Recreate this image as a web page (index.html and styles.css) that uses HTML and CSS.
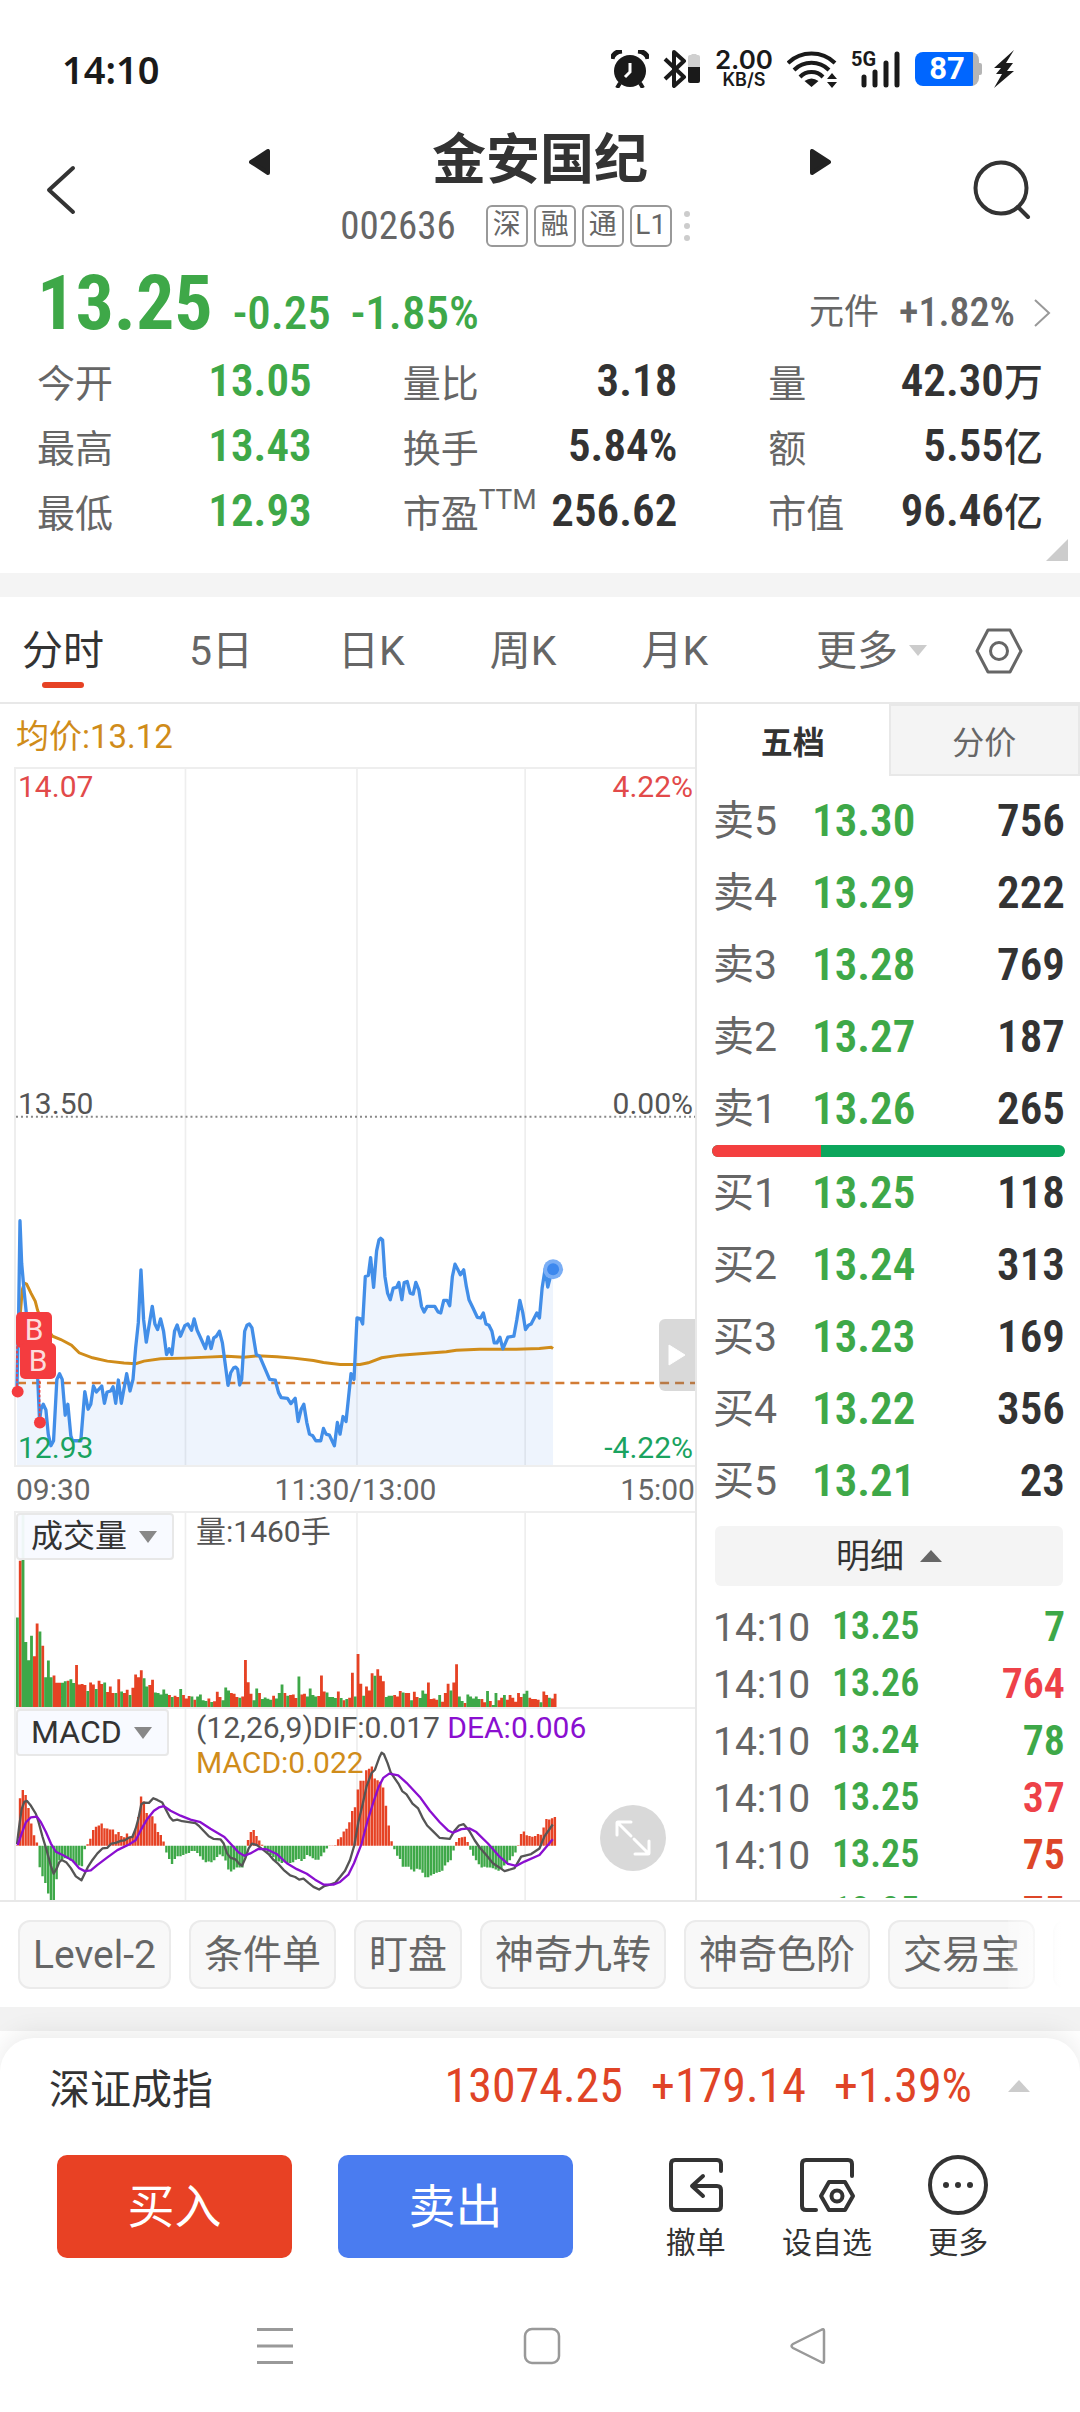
FILE: index.html
```html
<!DOCTYPE html>
<html lang="zh-CN">
<head>
<meta charset="utf-8">
<meta name="viewport" content="width=device-width, initial-scale=1">
<title>金安国纪 002636</title>
<link rel="stylesheet" href="styles.css">
</head>
<body>
<div class="app">
  <div class="status">
    <time class="clock">14:10</time>
    <div class="status-icons">
      <svg class="ic-alarm" width="38" height="38" viewBox="0 0 38 38"><circle cx="19" cy="21" r="16" fill="#1a1a1a"/><path d="M1 9A11 9 0 0 1 11 1M27 1A11 9 0 0 1 37 9" fill="none" stroke="#1a1a1a" stroke-width="5"/><path d="M9 33l-3 5M29 33l3 5" stroke="#1a1a1a" stroke-width="4"/><path d="M19 13v9l-5 5" fill="none" stroke="#fff" stroke-width="3"/></svg>
      <svg class="ic-bt" width="38" height="38" viewBox="0 0 38 38"><path d="M2 9l19 18-10 9V2l10 9L2 29" fill="none" stroke="#1a1a1a" stroke-width="4" stroke-linejoin="round"/><path d="M25 7a2 2 0 0 1 2-2h1l1-1h4l1 1h1a2 2 0 0 1 2 2v10H25z" fill="#d0d0d0"/><path d="M25 17h12v14a2 2 0 0 1-2 2h-8a2 2 0 0 1-2-2z" fill="#1a1a1a"/></svg>
      <div class="speed"><b>2.00</b><small>KB/S</small></div>
      <svg class="ic-wifi" width="50" height="38" viewBox="0 0 50 38"><g fill="none" stroke="#1a1a1a" stroke-width="4"><path d="M1 13a34 34 0 0 1 47 0"/><path d="M7 20a25 25 0 0 1 35 0"/><path d="M13 27a16 16 0 0 1 23 0"/></g><path d="M24.500 37l-7-6q7-5 14 0zM40 29l5-6 5 6zM40 32l5 6 5-6z" fill="#1a1a1a"/></svg>
      <div class="cell"><b>5G</b><svg width="40" height="37" viewBox="0 0 40 37"><g stroke="#1a1a1a" stroke-width="5" stroke-linecap="round"><path d="M3 26v8M14 21v13M25 12v22M36 3v31"/></g></svg></div>
      <div class="battery"><b>87</b><i></i></div>
      <svg width="22" height="38" viewBox="0 0 22 38"><path d="M21 0L1 18h7l-5 6h6L1 38l20-17h-7l6-8h-7z" fill="#1a1a1a"/></svg>
    </div>
  </div>

  <header class="header">
    <button class="icon-btn" aria-label="返回"><svg width="30" height="50" viewBox="0 0 30 50"><path d="M27 3L3 25l24 22" fill="none" stroke="#333" stroke-width="4" stroke-linecap="round" stroke-linejoin="round"/></svg></button>
    <button class="icon-btn step" aria-label="上一只"><svg width="22" height="26" viewBox="0 0 22 26"><path d="M19 2v22L2 13z" fill="#222" stroke="#222" stroke-width="4" stroke-linejoin="round"/></svg></button>
    <div class="title">
      <h1>金安国纪</h1>
      <div class="code-row">
        <span class="code">002636</span>
        <span class="tag">深</span><span class="tag">融</span><span class="tag">通</span><span class="tag">L1</span>
        <svg class="dots" width="6" height="30" viewBox="0 0 6 30" fill="#ccc"><circle cx="3" cy="3" r="3"/><circle cx="3" cy="15" r="3"/><circle cx="3" cy="27" r="3"/></svg>
      </div>
    </div>
    <button class="icon-btn step" aria-label="下一只"><svg width="22" height="26" viewBox="0 0 22 26"><path d="M3 2v22l17-11z" fill="#222" stroke="#222" stroke-width="4" stroke-linejoin="round"/></svg></button>
    <button class="icon-btn search" aria-label="搜索"><svg width="58" height="60" viewBox="0 0 58 60"><g fill="none" stroke="#333" stroke-width="4" stroke-linecap="round"><circle cx="28" cy="28" r="25.500"/><path d="M45 47l10 10"/></g></svg></button>
  </header>

  <section class="quote">
    <div class="quote-head">
      <strong class="price num">13.25</strong>
      <span class="change num">-0.25</span>
      <span class="change num">-1.85%</span>
      <a class="sector" href="#">元件<span class="num">+1.82%</span><svg width="18" height="30" viewBox="0 0 18 30"><path d="M2 2l14 13L2 28" fill="none" stroke="#999" stroke-width="2"/></svg></a>
    </div>
    <dl class="stats">
      <div><dt>今开</dt><dd class="num down">13.05</dd></div>
      <div><dt>量比</dt><dd class="num">3.18</dd></div>
      <div><dt>量</dt><dd class="num">42.30<i>万</i></dd></div>
      <div><dt>最高</dt><dd class="num down">13.43</dd></div>
      <div><dt>换手</dt><dd class="num">5.84%</dd></div>
      <div><dt>额</dt><dd class="num">5.55<i>亿</i></dd></div>
      <div><dt>最低</dt><dd class="num down">12.93</dd></div>
      <div><dt>市盈<sup>TTM</sup></dt><dd class="num">256.62</dd></div>
      <div><dt>市值</dt><dd class="num">96.46<i>亿</i></dd></div>
    </dl>
    <svg class="corner" width="22" height="22" viewBox="0 0 22 22"><path d="M22 0v22H0z" fill="#ccc"/></svg>
  </section>

  <nav class="tabs">
    <button class="tab on">分时</button>
    <button class="tab">5日</button>
    <button class="tab">日K</button>
    <button class="tab">周K</button>
    <button class="tab">月K</button>
    <button class="tab more">更多<svg width="18" height="11" viewBox="0 0 18 11"><path d="M0 0h18L9 11z" fill="#ccc"/></svg></button>
    <button class="tab gear" aria-label="设置"><svg width="48" height="48" viewBox="0 0 48 48"><g fill="none" stroke="#666" stroke-width="3" stroke-linejoin="round"><path d="M13 3h22l11 21-11 21H13L2 24z"/><circle cx="24" cy="24" r="8.500"/></g></svg></button>
  </nav>

  <main class="board">
    <section class="charts">
      <p class="avg">均价:13.12</p>
      <div class="pane price-pane">
        <svg class="plot" viewBox="0 0 2043 2097" preserveAspectRatio="none">
          <g class="grid"><path d="M510 0V2097M1026 0V2097M1532 0V2097"/></g>
          <path d="M0 1048H2043" class="mid"/>
          <g transform="translate(-45 1239)">
            <path id="area" class="area"/>
            <path class="base" d="M48 611H2088"/>
            <polyline class="avg-line" points="58,400 64,330 70,310 77,313 90,340 103,365 110,392 125,430 155,470 180,480 212,497 235,520 275,535 320,545 370,551 405,553 430,545 480,538 550,536 620,533 680,530 730,533 770,529 830,532 880,536 940,543 970,549 1020,555 1080,555 1105,550 1145,535 1200,527 1260,523 1340,517 1370,512 1440,509 1550,509 1620,507 1655,503 1661,507"/>
            <polyline id="price" class="price-line" points="48,620 53,400 57,122 62,250 70,340 78,420 95,480 110,590 116,725 120,690 127,675 135,692 142,765 150,800 158,785 168,600 176,583 184,600 193,708 201,675 210,770 215,785 240,785 252,637 262,690 270,675 278,620 287,638 303,620 311,672 319,638 330,635 337,622 345,672 353,602 362,672 378,583 388,635 397,600 405,505 413,430 421,270 429,420 437,488 455,380 463,433 471,450 480,418 489,455 498,525 506,508 514,525 522,455 530,436 540,470 553,438 562,433 573,452 581,418 590,452 615,507 623,472 632,507 640,475 648,470 657,455 666,490 683,618 691,580 700,565 706,563 712,570 718,617 724,600 733,455 740,437 747,433 755,445 768,525 778,530 808,600 825,602 835,640 843,655 862,657 872,673 885,657 894,727 903,690 911,675 920,730 928,765 938,770 947,785 962,785 970,748 978,765 988,768 1003,800 1012,730 1020,765 1029,712 1038,727 1045,660 1053,583 1062,600 1071,415 1082,418 1088,433 1096,290 1105,287 1112,233 1121,323 1130,213 1137,180 1142,175 1148,180 1155,290 1163,340 1171,360 1180,325 1190,323 1197,308 1206,360 1213,308 1222,305 1231,340 1240,343 1248,308 1257,330 1265,380 1273,397 1282,380 1305,380 1315,397 1323,400 1332,362 1342,362 1350,378 1358,290 1366,253 1374,268 1382,285 1392,270 1400,320 1408,360 1420,385 1433,413 1443,415 1451,400 1459,433 1468,437 1477,455 1484,490 1492,490 1501,473 1510,508 1525,473 1543,470 1552,420 1561,362 1570,400 1578,450 1587,437 1595,433 1612,400 1620,415 1628,325 1637,268 1645,322 1653,290 1661,268"/>
            <circle cx="1661" cy="268" r="30" fill="#7aaef5"/><circle cx="1661" cy="268" r="18" fill="#3d88ee"/>
            <path class="trade-stem" d="M48 500V630M116 590V725"/>
            <g fill="#f43c3f"><circle cx="50" cy="637" r="18"/><circle cx="117" cy="730" r="18"/></g>
          </g>
        </svg>
        <span class="lbl tl up">14.07</span><span class="lbl tr up">4.22%</span>
        <span class="lbl ml">13.50</span><span class="lbl mr">0.00%</span>
        <span class="lbl bl low">12.93</span><span class="lbl br low">-4.22%</span>
        <span class="mark mark-a">B</span><span class="mark mark-b">B</span>
        <button class="handle" aria-label="展开"><svg width="18" height="22" viewBox="0 0 18 22"><path d="M1 1v20l16-10z" fill="#fff" stroke="#fff" stroke-linejoin="round"/></svg></button>
      </div>
      <div class="times"><span>09:30</span><span>11:30/13:00</span><span>15:00</span></div>
      <div class="pane vol-pane">
        <svg class="plot" viewBox="0 0 2043 585" preserveAspectRatio="none"><g class="grid"><path d="M510 0V585M1026 0V585M1532 0V585"/></g><path id="vol-up" class="fill-up"/><path id="vol-down" class="fill-down"/></svg>
        <button class="picker">成交量<svg width="18" height="12" viewBox="0 0 18 12"><path d="M0 0h18L9 12z" fill="#888"/></svg></button>
        <span class="legend">量:1460手</span>
      </div>
      <div class="pane macd-pane">
        <svg class="plot" viewBox="0 0 2043 582" preserveAspectRatio="none"><g class="grid"><path d="M510 0V582M1026 0V582M1532 0V582"/></g>
          <path id="macd-up" class="fill-up"/><path id="macd-down" class="fill-down"/>
          <g transform="translate(-45 -620)">
            <polyline class="dif" points="48,1032 55,975 62,925 70,903 78,900 90,915 105,940 113,965 125,1010 137,1050 150,1098 158,1122 168,1105 175,1087 183,1080 197,1088 210,1105 225,1130 242,1142 250,1125 262,1100 275,1080 290,1060 305,1045 320,1043 332,1030 345,1028 360,1022 372,1020 385,1012 395,1010 405,985 413,955 422,910 430,905 445,906 458,892 470,897 485,905 495,925 508,950 517,960 530,957 545,962 585,968 597,978 610,992 625,1008 640,1016 660,1017 670,1030 680,1060 690,1073 705,1078 715,1090 725,1098 735,1075 745,1045 755,1030 770,1035 790,1050 805,1062 820,1080 835,1093 850,1110 870,1127 885,1132 897,1140 910,1137 925,1150 940,1162 957,1170 972,1160 990,1155 1005,1150 1020,1132 1035,1113 1050,1080 1063,1035 1075,965 1088,910 1100,855 1115,815 1125,805 1138,768 1145,753 1152,758 1163,785 1172,812 1185,832 1197,850 1207,870 1220,880 1238,908 1255,923 1270,955 1282,975 1300,993 1320,1013 1350,1016 1365,990 1378,975 1392,971 1408,990 1425,1020 1440,1042 1460,1065 1480,1090 1498,1102 1515,1114 1545,1105 1565,1070 1595,1062 1620,1045 1635,1008 1660,972"/>
            <polyline class="dea" points="50,1035 62,1000 75,965 90,950 108,948 120,965 135,995 150,1030 165,1055 190,1067 215,1082 235,1105 252,1114 270,1112 290,1095 320,1072 350,1050 385,1033 405,1020 420,990 440,955 460,930 475,920 490,916 510,930 540,945 570,957 600,965 630,985 672,1010 695,1035 715,1057 732,1067 750,1060 775,1046 800,1048 830,1062 860,1090 890,1108 920,1122 945,1140 970,1155 1000,1155 1020,1147 1045,1125 1062,1090 1085,1030 1103,960 1120,905 1135,860 1150,830 1168,817 1195,822 1220,845 1260,888 1290,930 1320,965 1345,990 1360,997 1385,986 1410,984 1430,995 1465,1030 1500,1070 1525,1092 1550,1098 1575,1085 1620,1065 1660,1017"/>
          </g>
        </svg>
        <button class="picker">MACD<svg width="18" height="12" viewBox="0 0 18 12"><path d="M0 0h18L9 12z" fill="#888"/></svg></button>
        <p class="legend macd-legend">(12,26,9)DIF:0.017 <span class="c-dea">DEA:0.006</span><br><span class="c-avg">MACD:0.022</span></p>
        <button class="expand" aria-label="全屏"><svg width="36" height="36" viewBox="0 0 36 36"><path d="M2 15V3q0-1 1-1h13M3 3l13 13M34 21v12q0 1-1 1H20M33 33L19 19" fill="none" stroke="#fff" stroke-width="3" stroke-linecap="round"/></svg></button>
      </div>
    </section>

    <aside class="book">
      <div class="book-tabs"><button class="on">五档</button><button>分价</button></div>
      <table class="depth"><tbody>
        <tr><th>卖5</th><td>13.30</td><td>756</td></tr>
        <tr><th>卖4</th><td>13.29</td><td>222</td></tr>
        <tr><th>卖3</th><td>13.28</td><td>769</td></tr>
        <tr><th>卖2</th><td>13.27</td><td>187</td></tr>
        <tr><th>卖1</th><td>13.26</td><td>265</td></tr>
      </tbody></table>
      <div class="ratio"><i></i></div>
      <table class="depth"><tbody>
        <tr><th>买1</th><td>13.25</td><td>118</td></tr>
        <tr><th>买2</th><td>13.24</td><td>313</td></tr>
        <tr><th>买3</th><td>13.23</td><td>169</td></tr>
        <tr><th>买4</th><td>13.22</td><td>356</td></tr>
        <tr><th>买5</th><td>13.21</td><td>23</td></tr>
      </tbody></table>
      <button class="detail">明细<svg width="22" height="12" viewBox="0 0 22 12"><path d="M11 0l11 12H0z" fill="#666"/></svg></button>
      <div class="ticks-wrap"><table class="ticks"><tbody>
        <tr><th>14:10</th><td>13.25</td><td>7</td></tr>
        <tr><th>14:10</th><td>13.26</td><td class="red">764</td></tr>
        <tr><th>14:10</th><td>13.24</td><td>78</td></tr>
        <tr><th>14:10</th><td>13.25</td><td class="red">37</td></tr>
        <tr><th>14:10</th><td>13.25</td><td class="brick">75</td></tr>
        <tr><th>14:10</th><td>13.25</td><td class="brick">75</td></tr>
      </tbody></table></div>
    </aside>
  </main>

  <div class="chips">
    <button>Level-2</button><button>条件单</button><button>盯盘</button><button>神奇九转</button><button>神奇色阶</button><button>交易宝</button><button class="next" aria-label="更多功能"></button>
  </div>

  <div class="dock">
    <div class="sheet">
      <div class="index-row">
        <span class="index-name">深证成指</span>
        <span class="idx">13074.25</span><span class="idx">+179.14</span><span class="idx">+1.39%</span>
        <svg width="22" height="12" viewBox="0 0 22 12"><path d="M11 0l11 12H0z" fill="#ccc"/></svg>
      </div>
      <div class="actions">
        <button class="trade buy">买入</button>
        <button class="trade sell">卖出</button>
        <div class="tools">
          <button><svg width="60" height="60" viewBox="0 0 60 60"><g fill="none" stroke="#333" stroke-width="4" stroke-linecap="round" stroke-linejoin="round"><path d="M55 16V9q0-4-4-4H9Q5 5 5 9v42q0 4 4 4h42q4 0 4-4V35q0-4-4-4H27M37 21L26 31l11 10"/></g></svg>撤单</button>
          <button><svg width="60" height="60" viewBox="0 0 60 60"><g fill="none" stroke="#333" stroke-width="4" stroke-linecap="round" stroke-linejoin="round"><path d="M55 21V9q0-4-4-4H9Q5 5 5 9v42q0 4 4 4h10M32 27h16l8 14-8 14H32l-8-14z"/><circle cx="40" cy="41" r="5.500"/></g></svg>设自选</button>
          <button><svg width="60" height="60" viewBox="0 0 60 60"><circle cx="30" cy="30" r="28" fill="none" stroke="#333" stroke-width="4"/><g fill="#333"><circle cx="18" cy="30" r="3"/><circle cx="30" cy="30" r="3"/><circle cx="42" cy="30" r="3"/></g></svg>更多</button>
        </div>
      </div>
      <div class="sysnav">
        <button aria-label="最近任务"><svg width="38" height="38" viewBox="0 0 38 38"><path d="M1 2.500h36M1 19h36M1 35.500h36" stroke="#999" stroke-width="3"/></svg></button>
        <button aria-label="主屏幕"><svg width="38" height="38" viewBox="0 0 38 38"><rect x="2" y="2" width="34" height="34" rx="7" fill="none" stroke="#999" stroke-width="2.500"/></svg></button>
        <button aria-label="返回"><svg width="38" height="38" viewBox="0 0 38 38"><path d="M35 4v30q0 3-3 1L4 21q-3-2 0-4L32 3q3-2 3 1z" fill="none" stroke="#999" stroke-width="2.500"/></svg></button>
      </div>
    </div>
  </div>
</div>
<script src="script.js"></script>
</body>
</html>
```
FILE: styles.css
```css
* { box-sizing: border-box; }
body { margin: 0; background: #fff; color: #333; font-family: Roboto, "Noto Sans CJK SC", sans-serif; }
button { font: inherit; color: inherit; background: none; border: 0; padding: 0; margin: 0; }
a { color: inherit; text-decoration: none; }
svg { display: block; flex: none; }
p, h1, dl, dd { margin: 0; }
i { font-style: normal; }

.num, .depth td, .ticks td, .idx, .code { font-family: "Roboto Condensed", Roboto, "Noto Sans CJK SC", sans-serif; }

/* status bar */
.status { display: flex; justify-content: space-between; align-items: center; height: 105px; padding: 33px 65px 0 62px; color: #1a1a1a; }
.clock { font-size: 38px; font-weight: 600; line-height: 68px; font-family: "Noto Sans", sans-serif; }
.status-icons { display: flex; align-items: center; gap: 14px; }
.speed { display: flex; flex-direction: column; align-items: center; font-family: Inter, sans-serif; }
.speed b { font-size: 26px; line-height: 22px; font-weight: 600; }
.speed small { font-size: 18px; line-height: 18px; font-weight: 600; }
.cell { position: relative; padding-left: 10px; }
.cell b { position: absolute; left: 0; top: 0; font-size: 20px; line-height: 16px; }
.battery { display: flex; align-items: center; justify-content: center; width: 64px; height: 34px; border-radius: 8px; background: linear-gradient(90deg, #06f 58px, #b5b5b5 58px); position: relative; color: #fff; }
.battery b { font-size: 31px; line-height: 34px; }
.battery i { position: absolute; right: -3px; top: 11px; width: 3px; height: 12px; border-radius: 0 2px 2px 0; background: #b5b5b5; }

/* title bar */
.header { display: grid; grid-template-columns: 203px 22px 1fr 22px 200px; align-items: start; height: 153px; padding: 26px 49px 0 46px; }
.icon-btn { display: flex; align-items: center; height: 60px; margin-top: 29px; }
.icon-btn.step { height: 26px; margin-top: 18px; }
.search { justify-content: flex-end; }
.title { display: flex; flex-direction: column; align-items: center; }
h1 { font-size: 54px; line-height: 60px; font-weight: 700; }
.code-row { display: flex; align-items: center; gap: 6px; height: 42px; margin: 14px 50px 0 0; color: #666; }
.code { font-size: 39px; line-height: 42px; margin-right: 24px; }
.tag { width: 42px; height: 42px; border: 2px solid #999; border-radius: 6px; font-size: 28px; line-height: 36px; text-align: center; }
.dots { margin-left: 6px; }

/* quote */
.quote { position: relative; height: 339px; padding: 4px 37px 0; border-bottom: 24px solid #f4f4f4; }
.quote-head { display: flex; align-items: baseline; height: 86px; color: #3ea848; }
.price { font-size: 76px; line-height: 82px; margin-right: 20px; }
.change { font-size: 47px; line-height: 48px; font-weight: 500; margin-right: 20px; }
.sector { display: flex; align-items: center; align-self: flex-start; margin: 29px -8px 0 auto; color: #666; font-size: 35px; line-height: 44px; }
.sector .num { font-size: 40px; font-weight: 500; margin: 0 18px 0 20px; }
.stats { display: grid; grid-template-columns: repeat(3, 1fr); column-gap: 91px; }
.stats > div { display: flex; justify-content: space-between; align-items: center; height: 65px; }
.stats dt { font-size: 38px; color: #666; white-space: nowrap; position: relative; }
.stats sup { position: absolute; left: 100%; top: 2px; font-size: 28px; line-height: 30px; }
.stats dd { font-size: 45px; line-height: 65px; font-weight: 600; white-space: nowrap; }
.stats dd i { font-size: 39px; line-height: 1; font-weight: 500; }
.down { color: #3ea848; }
.corner { position: absolute; right: 12px; bottom: 12px; }

/* period tabs */
.tabs { display: flex; align-items: center; height: 107px; padding: 2px 57px 0 22px; border-bottom: 2px solid #e8e8e8; color: #666; font-size: 41px; line-height: 60px; }
.tab { position: relative; display: flex; align-items: center; flex: none; margin-right: 85px; }
.tab.on { color: #333; }
.tab.on::after { content: ""; position: absolute; left: 20px; right: 20px; top: 61px; height: 6px; border-radius: 3px; background: #e64224; }
.tab.more { margin-left: auto; margin-right: 48px; gap: 11px; }
.tab.gear { margin-right: 0; }

/* charts */
.board { display: grid; grid-template-columns: 697fr 383fr; border-bottom: 2px solid #e8e8e8; }
.charts { border-right: 2px solid #e8e8e8; padding-left: 14px; min-width: 0; }
.avg { height: 63px; padding-left: 2px; font-size: 33px; line-height: 65px; color: #d08c1a; }
.pane { position: relative; border-top: 2px solid #eee; border-left: 2px solid #eee; }
.plot { display: block; width: 100%; height: 100%; overflow: hidden; }
.price-pane .plot { overflow: visible; }
.grid path { fill: none; stroke: #eee; stroke-width: 5; }
.price-pane { height: 700px; border-bottom: 2px solid #eee; }
.mid { stroke: #888; stroke-width: 6; stroke-dasharray: 6 9; }
.area { fill: rgba(61, 136, 238, .09); }
.price-line { fill: none; stroke: #428ee8; stroke-width: 10; stroke-linejoin: round; }
.avg-line { fill: none; stroke: #d08c1a; stroke-width: 9; }
.base { fill: none; stroke: #d27c35; stroke-width: 7; stroke-dasharray: 27 18; }
.trade-stem { fill: none; stroke: #f43c3f; stroke-width: 5; stroke-dasharray: 8 6; }
.fill-up { fill: #e64224; }
.fill-down { fill: #3ea848; }
.dif, .dea { fill: none; stroke: #555; stroke-width: 7; stroke-linejoin: round; }
.dea { stroke: #8a0fd0; }
.lbl { position: absolute; font-size: 30px; line-height: 30px; color: #555; }
.tl, .ml, .bl { left: 2px; }
.tr, .mr, .br { right: 2px; }
.tl, .tr { top: 3px; }
.ml, .mr { top: 320px; }
.bl, .br { bottom: 2px; }
.up { color: #e24a4a; }
.low { color: #1aa35f; }
.mark { position: absolute; width: 36px; height: 36px; border-radius: 5px; background: #f43c3f; color: #fcdcdc; font-size: 30px; line-height: 36px; text-align: center; }
.mark-a { left: 0; top: 543px; }
.mark-b { left: 4px; top: 574px; }
.handle { position: absolute; right: 0; top: 550px; width: 36px; height: 72px; border-radius: 6px 0 0 6px; background: rgba(120, 120, 120, .28); display: flex; align-items: center; justify-content: center; }
.times { display: flex; justify-content: space-between; height: 44px; padding-left: 2px; font-size: 30px; line-height: 46px; color: #666; }
.vol-pane { height: 196px; }
.macd-pane { height: 193px; }
.picker { position: absolute; left: 0; top: 0; display: flex; align-items: center; gap: 12px; height: 47px; padding: 0 15px 0 13px; border: 2px solid #e8e8e8; border-radius: 4px; background: rgba(248, 250, 255, .95); color: #333; font-size: 32px; line-height: 43px; }
.legend { position: absolute; left: 180px; top: 1px; font-size: 30px; line-height: 35px; color: #555; white-space: nowrap; }
.c-dea { color: #8a0fd0; }
.c-avg { color: #d08c1a; }
.expand { position: absolute; right: 29px; bottom: 29px; width: 66px; height: 66px; border-radius: 50%; background: #d9d9d9; display: flex; align-items: center; justify-content: center; }

/* order book */
.book-tabs { display: grid; grid-template-columns: 1fr 1fr; height: 72px; font-size: 32px; }
.book-tabs button { border: 2px solid #e8e8e8; background: #f4f4f4; color: #666; }
.book-tabs .on { border: 0; background: none; font-weight: 700; color: #333; }
.depth { width: 100%; border-collapse: collapse; }
.depth th, .ticks th { font-weight: 400; color: #666; text-align: left; font-size: 40px; padding: 0 0 0 16px; }
.depth th { width: 115px; line-height: 66px; font-size: 41px; }
.depth td, .ticks td { font-weight: 600; font-size: 45px; line-height: 72px; padding: 0; color: #3ea848; }
.depth td:last-child, .ticks td:last-child { text-align: right; padding-right: 15px; }
.depth td:last-child { color: #333; }
.depth tr { height: 72px; }
.depth:first-of-type { margin-top: 9px; }
.ratio { height: 12px; margin: 0 15px; border-radius: 6px; background: #0ca65c; overflow: hidden; }
.ratio i { display: block; width: 31%; height: 100%; background: #f43f3f; }
.detail { display: flex; align-items: center; justify-content: center; gap: 16px; width: calc(100% - 35px); height: 60px; margin: 9px 17px 0 18px; border-radius: 6px; background: #f4f4f4; font-size: 34px; line-height: 60px; }
.ticks-wrap { height: 312px; padding-top: 12px; overflow: hidden; }
.ticks { width: 100%; border-collapse: collapse; }
.ticks tr { height: 57px; }
.ticks th { width: 135px; line-height: 53px; padding-top: 4px; font-size: 39px; }
.ticks td { font-size: 38px; line-height: 57px; }
.ticks td:last-child { font-size: 42px; }
.ticks .red { color: #ee4148; }
.ticks .brick { color: #dd4628; }

/* chips */
.chips { position: relative; display: flex; gap: 18px; height: 105px; padding: 18px; overflow: hidden; }
.chips button { flex: none; height: 69px; padding: 0 13px; border: 2px solid #ebebeb; border-radius: 12px; background: #f8f8f8; color: #666; font-size: 39px; line-height: 62px; }
.chips .next { width: 108px; }
.chips::after { content: ""; position: absolute; right: 0; top: 0; width: 72px; height: 100%; background: linear-gradient(90deg, rgba(255, 255, 255, .2), #fff 75%); }

/* bottom sheet */
.dock { border-top: 24px solid #f2f2f2; padding-top: 7px; }
.sheet { border-radius: 34px 34px 0 0; background: #fff; box-shadow: 0 -6px 24px rgba(0, 0, 0, .08); }
.index-row { display: flex; align-items: center; height: 96px; padding: 0 50px 0 49px; }
.index-name { font-size: 41px; margin-right: auto; }
.idx { font-size: 48px; line-height: 60px; color: #e04426; margin-left: 28px; }
.index-row svg { margin-left: 36px; }
.actions { display: flex; padding: 21px 56px 0 57px; }
.trade { flex: 235 1 0; height: 103px; border-radius: 10px; color: #fff; font-size: 47px; line-height: 101px; }
.buy { background: #e84124; margin-right: 46px; }
.sell { background: #4a7cf0; margin-right: 57px; }
.tools { flex: 394 1 0; display: grid; grid-template-columns: repeat(3, 1fr); }
.tools button { display: flex; flex-direction: column; align-items: center; gap: 8px; font-size: 30px; line-height: 40px; }
.sysnav { display: flex; justify-content: space-between; padding: 64px 253px 46px 256px; }
```
FILE: script.js
```js
// One entry per minute; positive = up minute, negative = down minute.
const volume = [-270,441,-579,-196,-141,-215,153,252,-228,185,-90,-140,-90,95,73,73,-73,-78,79,-84,-72,127,68,69,66,-48,74,68,-54,79,69,-74,45,62,42,-42,84,-47,42,52,-36,58,98,90,111,-87,-62,66,82,-44,-42,-38,-53,-40,36,-30,34,30,-54,36,26,33,-32,22,-32,-38,-20,-18,26,-15,17,46,30,-20,-59,-50,42,40,30,-28,32,142,75,40,-20,-56,42,-24,-29,-25,-22,34,-26,-42,-68,42,-34,36,38,27,-92,38,40,-32,-56,-36,-32,33,95,47,-44,-30,-30,-27,47,-27,20,-24,28,103,-32,160,70,-34,62,50,102,-94,114,94,78,-30,-34,-34,36,32,48,-44,42,42,-20,46,30,-27,-50,-40,74,24,26,22,-36,16,42,70,-50,74,129,-32,-18,12,-38,-32,-26,-32,-24,24,14,-48,18,-6,-42,20,28,-36,22,36,28,16,42,30,-40,-49,28,24,24,22,-14,47,36,-28,26,40];
const macd = [2,145,170,155,115,68,32,10,-65,-93,-113,-145,-165,-165,-102,-45,-40,-38,-40,-45,-50,-58,-60,-62,-10,5,22,48,58,62,68,54,53,50,50,35,42,30,26,38,28,30,50,88,150,135,100,92,90,68,42,33,13,-20,-40,-55,-40,-32,-32,-28,-24,-22,-16,-16,-22,-32,-42,-50,-48,-50,-44,-34,-26,-32,-45,-72,-78,-72,-66,-66,-66,-35,18,42,48,30,16,3,-10,-20,-28,-35,-46,-48,-52,-50,-52,-52,-50,-42,-40,-46,-40,-28,-32,-38,-42,-42,-32,-20,-8,1,1,2,20,26,44,52,72,106,118,172,198,198,230,235,242,205,200,195,178,122,62,14,-10,-30,-40,-64,-64,-64,-72,-78,-70,-72,-82,-96,-96,-90,-86,-82,-80,-76,-60,-50,-44,-14,12,24,26,28,12,-12,-30,-44,-56,-66,-64,-66,-66,-68,-72,-76,-70,-60,-54,-44,-32,-20,2,36,44,32,30,28,30,36,34,56,82,80,84,88];
const step = 8.47;

function bars(data, sign, base, signed, width) {
  return data.map((v, i) => {
    if (Math.sign(v) !== sign) return '';
    const h = signed ? v : Math.abs(v);
    return `M${(i * step).toFixed(1)} ${base}v${-h}h${width}V${base}z`;
  }).join('');
}
const set = (id, d) => document.getElementById(id).setAttribute('d', d);

set('vol-up', bars(volume, 1, 585, false, 8.5));
set('vol-down', bars(volume, -1, 585, false, 8.5));
set('macd-up', bars(macd, 1, 417, true, 7.2));
set('macd-down', bars(macd, -1, 417, true, 7.2));
set('area', 'M48 858L' + document.getElementById('price').getAttribute('points') + ' 1661,858z');
```
